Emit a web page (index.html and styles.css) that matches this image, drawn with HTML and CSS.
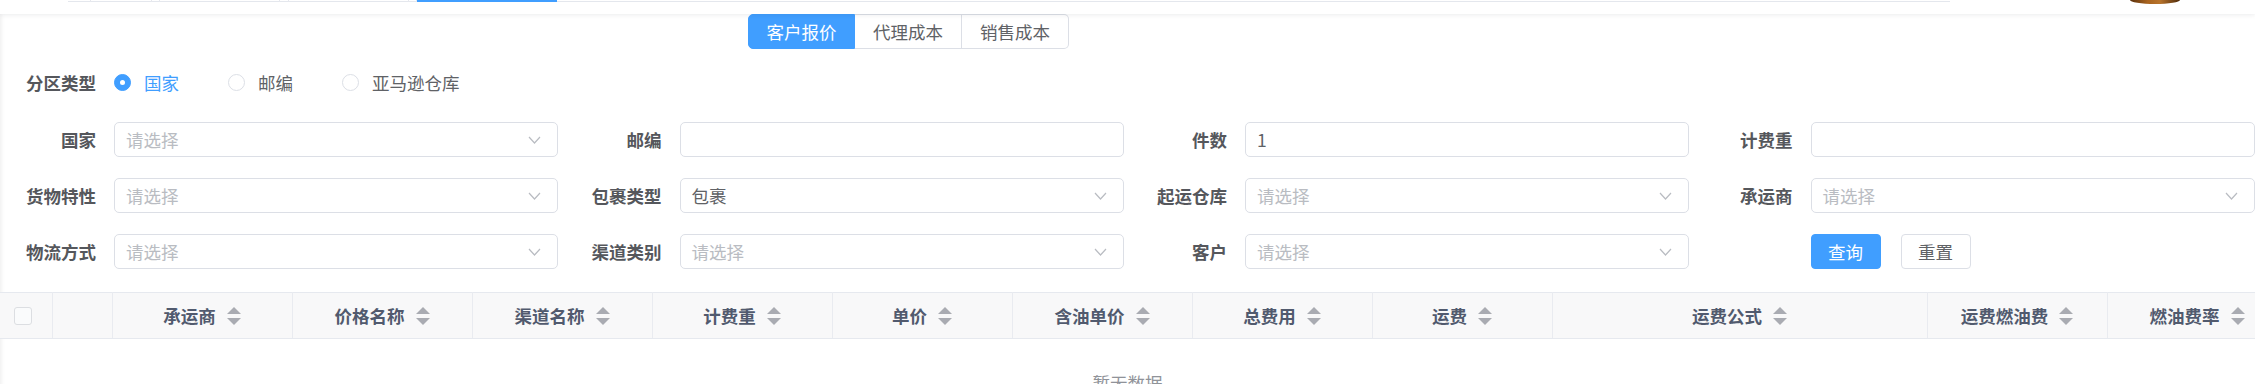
FILE: index.html
```html
<!DOCTYPE html>
<html lang="zh-CN">
<head>
  <meta charset="UTF-8">
  <title>报价查询</title>
  <link rel="stylesheet" href="styles.css">
</head>
<body>
  <div class="navbar">
    <div class="tags">
      <span class="tag" style="width:23px"></span>
      <span class="tag" style="width:61px"></span>
      <span class="tag" style="width:8px"></span>
      <span class="tag" style="width:120px"></span>
      <span class="tag" style="width:9px"></span>
      <span class="tag" style="width:120px"></span>
      <span class="tag" style="width:8px"></span>
      <span class="tag tag-active" style="width:140px"></span>
    </div>
    <div class="avatar"></div>
  </div>

  <div class="main">
    <div class="switch">
      <button class="seg seg-active">客户报价</button>
      <button class="seg">代理成本</button>
      <button class="seg">销售成本</button>
    </div>

    <form class="query">
      <div class="form-item radio-row">
        <label class="label">分区类型</label>
        <div class="radios">
          <span class="radio radio-checked"><i class="dot"></i>国家</span>
          <span class="radio"><i class="dot"></i>邮编</span>
          <span class="radio"><i class="dot"></i>亚马逊仓库</span>
        </div>
      </div>

      <div class="grid">
        <div class="form-item">
          <label class="label">国家</label>
          <div class="control select"><span class="placeholder">请选择</span><svg class="arrow" width="13" height="8" viewBox="0 0 13 8"><polyline points="1,1 6.5,7 12,1"/></svg></div>
        </div>
        <div class="form-item">
          <label class="label">邮编</label>
          <div class="control"></div>
        </div>
        <div class="form-item">
          <label class="label">件数</label>
          <div class="control"><span class="value">1</span></div>
        </div>
        <div class="form-item">
          <label class="label">计费重</label>
          <div class="control"></div>
        </div>

        <div class="form-item">
          <label class="label">货物特性</label>
          <div class="control select"><span class="placeholder">请选择</span><svg class="arrow" width="13" height="8" viewBox="0 0 13 8"><polyline points="1,1 6.5,7 12,1"/></svg></div>
        </div>
        <div class="form-item">
          <label class="label">包裹类型</label>
          <div class="control select"><span class="value">包裹</span><svg class="arrow" width="13" height="8" viewBox="0 0 13 8"><polyline points="1,1 6.5,7 12,1"/></svg></div>
        </div>
        <div class="form-item">
          <label class="label">起运仓库</label>
          <div class="control select"><span class="placeholder">请选择</span><svg class="arrow" width="13" height="8" viewBox="0 0 13 8"><polyline points="1,1 6.5,7 12,1"/></svg></div>
        </div>
        <div class="form-item">
          <label class="label">承运商</label>
          <div class="control select"><span class="placeholder">请选择</span><svg class="arrow" width="13" height="8" viewBox="0 0 13 8"><polyline points="1,1 6.5,7 12,1"/></svg></div>
        </div>

        <div class="form-item">
          <label class="label">物流方式</label>
          <div class="control select"><span class="placeholder">请选择</span><svg class="arrow" width="13" height="8" viewBox="0 0 13 8"><polyline points="1,1 6.5,7 12,1"/></svg></div>
        </div>
        <div class="form-item">
          <label class="label">渠道类别</label>
          <div class="control select"><span class="placeholder">请选择</span><svg class="arrow" width="13" height="8" viewBox="0 0 13 8"><polyline points="1,1 6.5,7 12,1"/></svg></div>
        </div>
        <div class="form-item">
          <label class="label">客户</label>
          <div class="control select"><span class="placeholder">请选择</span><svg class="arrow" width="13" height="8" viewBox="0 0 13 8"><polyline points="1,1 6.5,7 12,1"/></svg></div>
        </div>
        <div class="form-item buttons">
          <button type="button" class="btn btn-primary">查询</button>
          <button type="button" class="btn">重置</button>
        </div>
      </div>
    </form>

    <div class="table-wrap">
      <table class="table">
        <colgroup>
          <col style="width:52px">
          <col style="width:60px">
          <col style="width:180px">
          <col style="width:180px">
          <col style="width:180px">
          <col style="width:180px">
          <col style="width:180px">
          <col style="width:180px">
          <col style="width:180px">
          <col style="width:180px">
          <col style="width:375px">
          <col style="width:180px">
          <col style="width:180px">
        </colgroup>
        <thead>
          <tr>
            <th><span class="checkbox"></span></th>
            <th></th>
            <th><span class="th-cell">承运商<svg class="sort" width="14" height="18" viewBox="0 0 14 18"><polygon points="0,7 7,0 14,7"/><polygon points="0,11 14,11 7,18"/></svg></span></th>
            <th><span class="th-cell">价格名称<svg class="sort" width="14" height="18" viewBox="0 0 14 18"><polygon points="0,7 7,0 14,7"/><polygon points="0,11 14,11 7,18"/></svg></span></th>
            <th><span class="th-cell">渠道名称<svg class="sort" width="14" height="18" viewBox="0 0 14 18"><polygon points="0,7 7,0 14,7"/><polygon points="0,11 14,11 7,18"/></svg></span></th>
            <th><span class="th-cell">计费重<svg class="sort" width="14" height="18" viewBox="0 0 14 18"><polygon points="0,7 7,0 14,7"/><polygon points="0,11 14,11 7,18"/></svg></span></th>
            <th><span class="th-cell">单价<svg class="sort" width="14" height="18" viewBox="0 0 14 18"><polygon points="0,7 7,0 14,7"/><polygon points="0,11 14,11 7,18"/></svg></span></th>
            <th><span class="th-cell">含油单价<svg class="sort" width="14" height="18" viewBox="0 0 14 18"><polygon points="0,7 7,0 14,7"/><polygon points="0,11 14,11 7,18"/></svg></span></th>
            <th><span class="th-cell">总费用<svg class="sort" width="14" height="18" viewBox="0 0 14 18"><polygon points="0,7 7,0 14,7"/><polygon points="0,11 14,11 7,18"/></svg></span></th>
            <th><span class="th-cell">运费<svg class="sort" width="14" height="18" viewBox="0 0 14 18"><polygon points="0,7 7,0 14,7"/><polygon points="0,11 14,11 7,18"/></svg></span></th>
            <th><span class="th-cell">运费公式<svg class="sort" width="14" height="18" viewBox="0 0 14 18"><polygon points="0,7 7,0 14,7"/><polygon points="0,11 14,11 7,18"/></svg></span></th>
            <th><span class="th-cell">运费燃油费<svg class="sort" width="14" height="18" viewBox="0 0 14 18"><polygon points="0,7 7,0 14,7"/><polygon points="0,11 14,11 7,18"/></svg></span></th>
            <th><span class="th-cell">燃油费率<svg class="sort" width="14" height="18" viewBox="0 0 14 18"><polygon points="0,7 7,0 14,7"/><polygon points="0,11 14,11 7,18"/></svg></span></th>
          </tr>
        </thead>
      </table>
      <div class="empty">暂无数据</div>
    </div>
  </div>
</body>
</html>
```

FILE: styles.css
```css
body {
  margin: 0;
  padding: 0;
  background: #fff;
  font-family: "Noto Sans CJK SC", "Noto Sans", sans-serif;
  font-size: 17.5px;
  color: #606266;
  overflow: hidden;
}

/* top bar, scrolled so only its bottom shows */
.navbar {
  display: flex;
  align-items: flex-start;
  height: 14px;
  background: #fff;
  box-shadow: 0 1px 5px rgba(0, 21, 41, 0.08);
  position: relative;
  z-index: 2;
}

.tags {
  display: flex;
  margin-left: 68px;
  width: 1882px;
  height: 1px;
  border-bottom: 1px solid #e4e7ed;
}

.tag {
  height: 2px;
  border-right: 1px solid #e6e8ee;
  box-sizing: border-box;
}

.tag-active {
  background: #409eff;
  border-right: none;
  height: 2px;
}

.avatar {
  margin-left: auto;
  margin-right: 75px;
  width: 50px;
  height: 4px;
  border-radius: 0 0 25px 25px / 0 0 4px 4px;
  background: linear-gradient(90deg, #5a300c, #a8631f 35%, #b8742c 60%, #4e2a0a);
}

.main {
  box-shadow: inset 4px 0 4px -3px rgba(0, 0, 0, 0.08);
  min-height: 370px;
}

/* segment switch */
.switch {
  display: flex;
  margin-left: 748px;
  height: 35px;
}

.seg {
  width: 107px;
  height: 35px;
  padding: 0;
  font-family: inherit;
  font-size: 17.5px;
  color: #606266;
  background: #fff;
  border: 1px solid #dcdfe6;
  border-left: none;
  cursor: pointer;
}

.seg:first-child {
  border-left: 1px solid #409eff;
  border-radius: 5px 0 0 5px;
}

.seg:last-child {
  border-radius: 0 5px 5px 0;
}

.seg-active {
  background: #409eff;
  border-color: #409eff;
  color: #fff;
}

/* form */
.query {
  margin: 16px 0 0;
  padding-left: 14px;
}

.form-item {
  display: flex;
  align-items: center;
  height: 35px;
}

.label {
  width: 100px;
  padding-right: 18px;
  box-sizing: border-box;
  text-align: right;
  font-weight: 700;
  color: #55575c;
  flex-shrink: 0;
  white-space: nowrap;
}

.radio-row {
  margin-bottom: 22px;
}

.radios {
  display: flex;
  align-items: center;
}

.radio {
  display: flex;
  align-items: center;
  margin-right: 49px;
  color: #606266;
}

.radio .dot {
  width: 17px;
  height: 17px;
  box-sizing: border-box;
  border: 1px solid #dcdfe6;
  border-radius: 50%;
  background: #fff;
  margin-right: 13px;
  position: relative;
}

.radio-checked {
  color: #409eff;
}

.radio-checked .dot {
  background: #409eff;
  border-color: #409eff;
}

.radio-checked .dot::after {
  content: "";
  position: absolute;
  left: 5px;
  top: 5px;
  width: 5px;
  height: 5px;
  border-radius: 50%;
  background: #fff;
}

.grid {
  display: grid;
  grid-template-columns: repeat(4, 544px);
  column-gap: 21.5px;
  row-gap: 21px;
}

.control {
  width: 444px;
  height: 35px;
  box-sizing: border-box;
  border: 1px solid #dcdfe6;
  border-radius: 5px;
  display: flex;
  align-items: center;
  justify-content: space-between;
  padding: 0 16px 0 11px;
  flex-shrink: 0;
}

.placeholder {
  color: #b9bcc2;
}

.value {
  color: #606266;
}

.arrow {
  fill: none;
  stroke: #b9bcc2;
  stroke-width: 1.2;
}

.buttons {
  padding-left: 100px;
  gap: 20px;
}

.btn {
  width: 70px;
  height: 35px;
  padding: 0;
  font-family: inherit;
  font-size: 17.5px;
  color: #606266;
  background: #fff;
  border: 1px solid #dcdfe6;
  border-radius: 4px;
  cursor: pointer;
}

.btn-primary {
  background: #409eff;
  border-color: #409eff;
  color: #fff;
}

/* table */
.table-wrap {
  margin-top: 23px;
  width: 100%;
  overflow: hidden;
}

.table {
  table-layout: fixed;
  border-collapse: collapse;
  width: 2287px;
}

.table th {
  height: 45px;
  padding: 0;
  background: #f8f8f9;
  border-top: 1px solid #e6e9ef;
  border-bottom: 1px solid #e6e9ef;
  border-right: 1px solid #e9ebf0;
  text-align: center;
  font-weight: 700;
  color: #515a6e;
  white-space: nowrap;
}

.th-cell {
  display: inline-flex;
  align-items: center;
  gap: 11px;
}

.sort {
  fill: #a9abb2;
}

.checkbox {
  display: block;
  width: 18px;
  height: 18px;
  margin-left: 14px;
  box-sizing: border-box;
  border: 1px solid #dcdee2;
  border-radius: 3px;
  background: #fafbfc;
}

.empty {
  padding-top: 31px;
  text-align: center;
  color: #909399;
  line-height: 25px;
}
```
